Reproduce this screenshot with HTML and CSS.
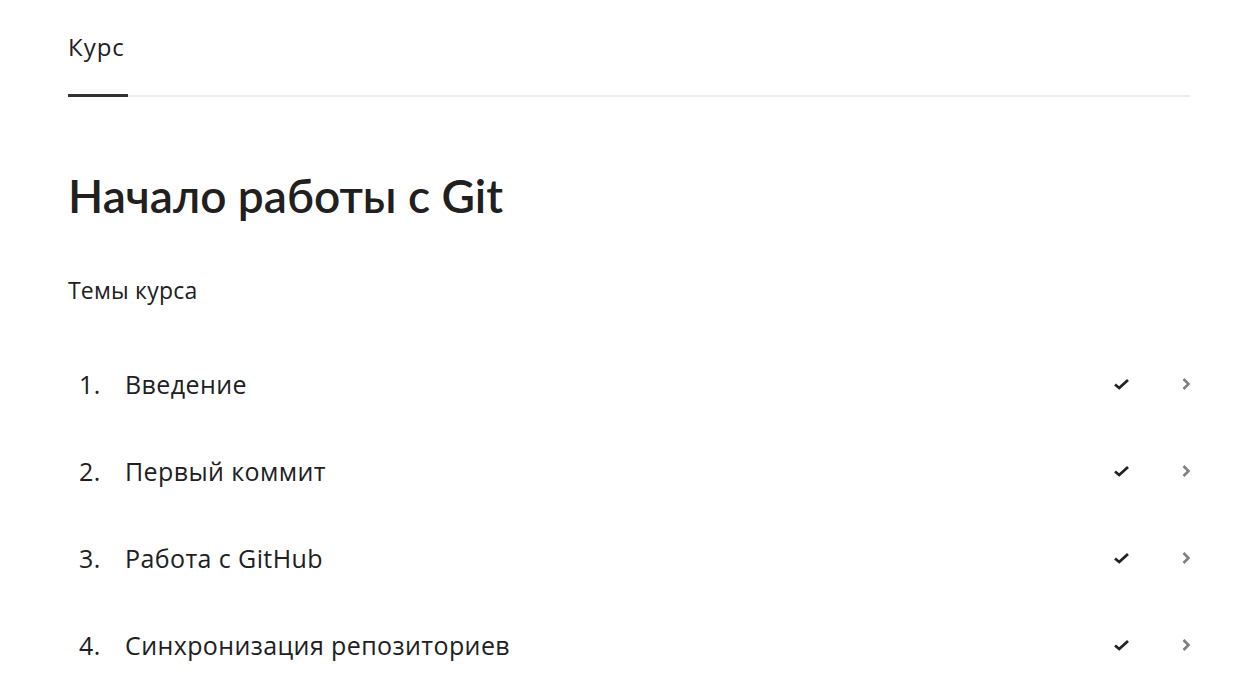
FILE: index.html
```html
<!DOCTYPE html>
<html lang="ru">
<head>
<meta charset="utf-8">
<link rel="stylesheet" href="styles.css">
</head>
<body>
<div class="page">
  <nav class="tabs">
    <div class="tab tab-active">Курс</div>
  </nav>
  <h1 class="title">Начало работы с Git</h1>
  <div class="subtitle">Темы курса</div>
  <ol class="topics">
    <li class="topic">
      <span class="num">1.</span><span class="name">Введение</span>
      <svg class="check" width="17" height="12" viewBox="0 0 17 12"><path d="M2 6.5l4.2 3.5 8.8-8" fill="none" stroke="#222" stroke-width="2.8"/></svg>
      <svg class="chev" width="10" height="14" viewBox="0 0 10 14"><path d="M2.5 2l5 5-5 5" fill="none" stroke="#808080" stroke-width="2.6"/></svg>
    </li>
    <li class="topic">
      <span class="num">2.</span><span class="name">Первый коммит</span>
      <svg class="check" width="17" height="12" viewBox="0 0 17 12"><path d="M2 6.5l4.2 3.5 8.8-8" fill="none" stroke="#222" stroke-width="2.8"/></svg>
      <svg class="chev" width="10" height="14" viewBox="0 0 10 14"><path d="M2.5 2l5 5-5 5" fill="none" stroke="#808080" stroke-width="2.6"/></svg>
    </li>
    <li class="topic">
      <span class="num">3.</span><span class="name">Работа с GitHub</span>
      <svg class="check" width="17" height="12" viewBox="0 0 17 12"><path d="M2 6.5l4.2 3.5 8.8-8" fill="none" stroke="#222" stroke-width="2.8"/></svg>
      <svg class="chev" width="10" height="14" viewBox="0 0 10 14"><path d="M2.5 2l5 5-5 5" fill="none" stroke="#808080" stroke-width="2.6"/></svg>
    </li>
    <li class="topic">
      <span class="num">4.</span><span class="name">Синхронизация репозиториев</span>
      <svg class="check" width="17" height="12" viewBox="0 0 17 12"><path d="M2 6.5l4.2 3.5 8.8-8" fill="none" stroke="#222" stroke-width="2.8"/></svg>
      <svg class="chev" width="10" height="14" viewBox="0 0 10 14"><path d="M2.5 2l5 5-5 5" fill="none" stroke="#808080" stroke-width="2.6"/></svg>
    </li>
  </ol>
</div>
</body>
</html>
```
FILE: styles.css
```css
html, body {
  margin: 0;
  padding: 0;
  background: #fff;
}
body {
  font-family: "Open Sans", "Noto Sans", sans-serif;
  color: #21201f;
}
.page {
  padding: 0 52px 0 68px;
}
.tabs {
  display: flex;
  border-bottom: 2px solid #eeeeee;
  width: 1122px;
}
.tab {
  font-size: 24px;
  line-height: 28px;
  letter-spacing: 1px;
  padding: 33px 0 33px;
  margin-bottom: -2px;
}
.tab-active {
  border-bottom: 3px solid #333;
  width: 60px;
}
.title {
  font-family: "Lato", "Noto Sans", sans-serif;
  font-size: 46px;
  font-weight: 600;
  line-height: 60px;
  margin: 69px 0 0;
}
.subtitle {
  font-size: 23px;
  line-height: 28px;
  letter-spacing: 0.2px;
  margin-top: 50px;
}
.topics {
  list-style: none;
  margin: 36px 0 0;
  padding: 0;
}
.topic {
  display: flex;
  align-items: center;
  height: 87px;
  font-size: 25px;
  letter-spacing: 0.4px;
}
.num {
  width: 57px;
  text-align: left;
  padding-left: 11px;
  box-sizing: border-box;
}
.name {
  flex: 1;
}
.check {
  margin-right: 51px;
}
.chev {
  margin-right: -1px;
}
```
